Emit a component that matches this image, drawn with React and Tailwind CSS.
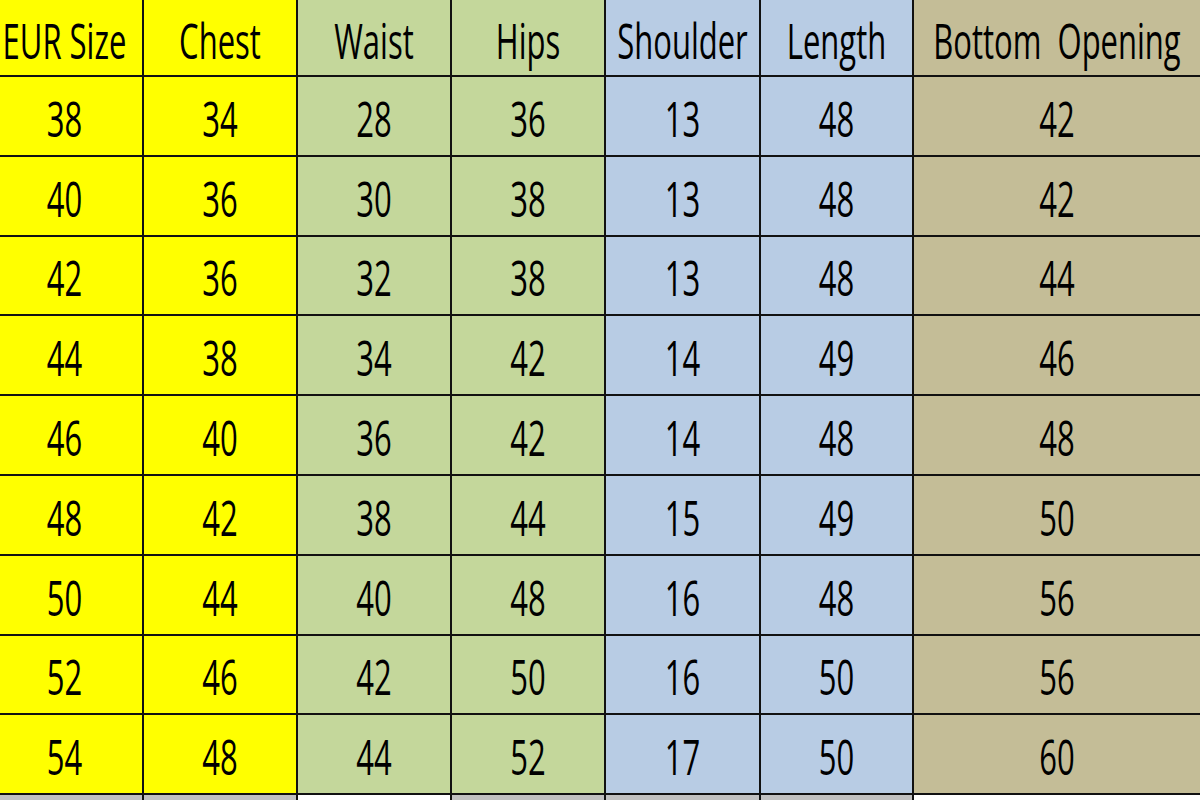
import React from 'react';

const headers = ['EUR Size', 'Chest', 'Waist', 'Hips', 'Shoulder', 'Length', 'Bottom  Opening'];

const rows = [
  [38, 34, 28, 36, 13, 48, 42],
  [40, 36, 30, 38, 13, 48, 42],
  [42, 36, 32, 38, 13, 48, 44],
  [44, 38, 34, 42, 14, 49, 46],
  [46, 40, 36, 42, 14, 48, 48],
  [48, 42, 38, 44, 15, 49, 50],
  [50, 44, 40, 48, 16, 48, 56],
  [52, 46, 42, 50, 16, 50, 56],
  [54, 48, 44, 52, 17, 50, 60],
];

// column fills, Excel style
const fills = [
  'bg-[#ffff00]',
  'bg-[#ffff00]',
  'bg-[#c4d79b]',
  'bg-[#c4d79b]',
  'bg-[#b8cce4]',
  'bg-[#b8cce4]',
  'bg-[#c4bd97]',
];

const strip = [
  'bg-[#c0c0c0]',
  'bg-[#c0c0c0]',
  'bg-white',
  'bg-[#c0c0c0]',
  'bg-[#c0c0c0]',
  'bg-[#c0c0c0]',
  'bg-white',
];

const Cell = ({ col, children, height }) => (
  <div
    className={`${fills[col]} ${height} flex items-center justify-center border-b-2 border-[#111] ${col < 6 ? 'border-r-2' : ''} overflow-visible`}
  >
    <span className="block pt-[3px] text-[31px] font-normal leading-none text-black whitespace-pre scale-y-[1.6]">
      {children}
    </span>
  </div>
);

const App = () => {
  return (
    <div
      className="w-[1200px] h-[800px] overflow-hidden bg-white"
      style={{ fontFamily: '"Open Sans", "Noto Sans", sans-serif' }}
    >
      {/* first column runs a little past the left edge of the shot */}
      <div className="-ml-[13px] w-[1213px] grid grid-cols-[157px_154px_154px_154px_155px_153px_1fr]">
        {headers.map((h, i) => (
          <Cell key={h} col={i} height="h-[77px]">
            {h}
          </Cell>
        ))}
        {rows.map((r, ri) =>
          r.map((v, ci) => (
            <Cell key={`${ri}-${ci}`} col={ci} height="h-[79.8px]">
              {v}
            </Cell>
          ))
        )}
        {strip.map((s, i) => (
          <div key={i} className={`${s} h-[10px] ${i < 6 ? 'border-r-2 border-[#111]' : ''}`} />
        ))}
      </div>
    </div>
  );
};

export default App;
